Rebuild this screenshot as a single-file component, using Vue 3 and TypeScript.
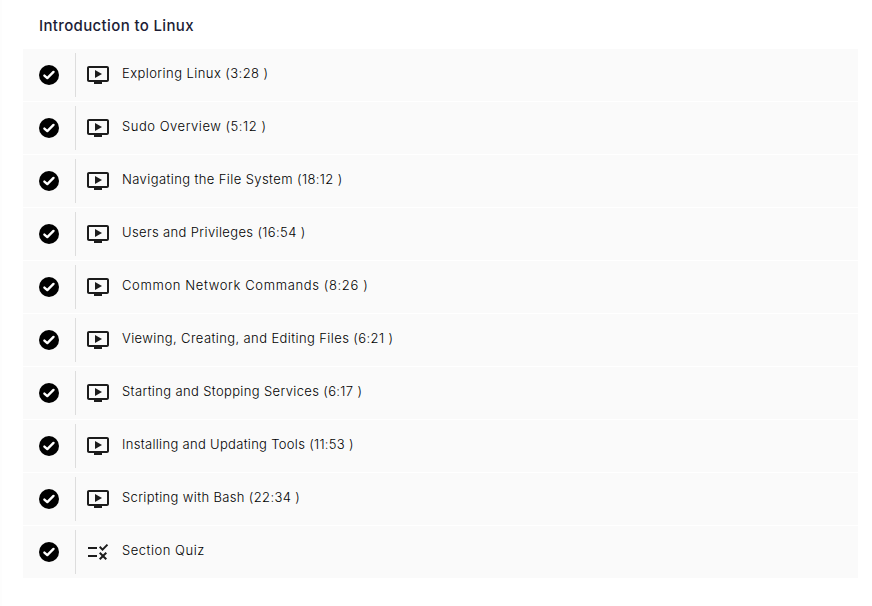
<script setup lang="ts">
interface Lesson {
  title: string
  kind: 'video' | 'quiz'
  spacing: number
}

const lessons: Lesson[] = [
  { title: 'Exploring Linux (3:28 )', kind: 'video', spacing: 0.43 },
  { title: 'Sudo Overview (5:12 )', kind: 'video', spacing: 0.53 },
  { title: 'Navigating the File System (18:12 )', kind: 'video', spacing: 0.4 },
  { title: 'Users and Privileges (16:54 )', kind: 'video', spacing: 0.37 },
  { title: 'Common Network Commands (8:26 )', kind: 'video', spacing: 0.63 },
  { title: 'Viewing, Creating, and Editing Files (6:21 )', kind: 'video', spacing: 0.4 },
  { title: 'Starting and Stopping Services (6:17 )', kind: 'video', spacing: 0.36 },
  { title: 'Installing and Updating Tools (11:53 )', kind: 'video', spacing: 0.31 },
  { title: 'Scripting with Bash (22:34 )', kind: 'video', spacing: 0.36 },
  { title: 'Section Quiz', kind: 'quiz', spacing: 0.52 },
]
</script>

<template>
  <main class="section">
    <h2 class="heading">Introduction to Linux</h2>
    <ul class="lessons">
      <li v-for="lesson in lessons" :key="lesson.title" class="lesson">
        <div class="status">
          <svg class="check" viewBox="0 0 20 20">
            <circle cx="10" cy="10" r="10" />
            <path d="M5.4 10.6 8.3 13.1 14.5 6.9" />
          </svg>
        </div>
        <svg class="kind" viewBox="0 0 24 24">
          <path
            v-if="lesson.kind === 'video'"
            d="M21 3H3c-1.11 0-2 .89-2 2v12c0 1.1.89 2 2 2h5v2h8v-2h5c1.1 0 1.99-.9 1.99-2L23 5c0-1.11-.9-2-2-2zm0 14H3V5h18v12zm-5-6l-7 4V7z"
          />
          <path
            v-else
            d="M16.54 11L13 7.46l1.41-1.41 2.12 2.12 4.24-4.24 1.41 1.41L16.54 11zM11 7H2v2h9V7zm10 6.41L19.59 12 17 14.59 14.41 12 13 13.41 15.59 16 13 18.59 14.41 20 17 17.41 19.59 20 21 18.59 18.41 16 21 13.41zM11 15H2v2h9v-2z"
          />
        </svg>
        <span class="title" :style="{ letterSpacing: lesson.spacing + 'px' }">{{ lesson.title }}</span>
      </li>
    </ul>
  </main>
</template>

<style>
body {
  background: #fff;
}
</style>

<style scoped>
.section {
  box-sizing: border-box;
  height: 606px;
  padding: 0 14px 0 21px;
  border-left: 2px solid #fdfdfd;
  font-family: Inter, 'Liberation Sans', sans-serif;
}
.heading {
  height: 49px;
  margin: 0;
  padding-left: 16px;
  box-sizing: border-box;
  font-size: 15px;
  font-weight: 500;
  letter-spacing: 0.36px;
  line-height: 51px;
  color: #1c1d35;
}
.lessons {
  display: flex;
  flex-direction: column;
  gap: 1px;
  margin: 0;
  padding: 0;
  list-style: none;
}
.lesson {
  display: flex;
  align-items: center;
  height: 52px;
  background: #fafafa;
}
.status {
  display: flex;
  align-items: center;
  box-sizing: border-box;
  width: 53px;
  height: 44px;
  padding-left: 16px;
  border-right: 1px solid #ddd;
}
.check {
  width: 20px;
  height: 20px;
}
.check circle {
  fill: #000;
}
.check path {
  fill: none;
  stroke: #fff;
  stroke-width: 2.4;
  stroke-linecap: round;
  stroke-linejoin: round;
}
.kind {
  width: 24px;
  height: 24px;
  margin: 0 12px 0 10px;
  fill: #1c1c1c;
}
.title {
  padding-bottom: 4px;
  font-size: 13px;
  font-weight: 300;
  line-height: 18px;
  color: #000;
  white-space: nowrap;
}
</style>
